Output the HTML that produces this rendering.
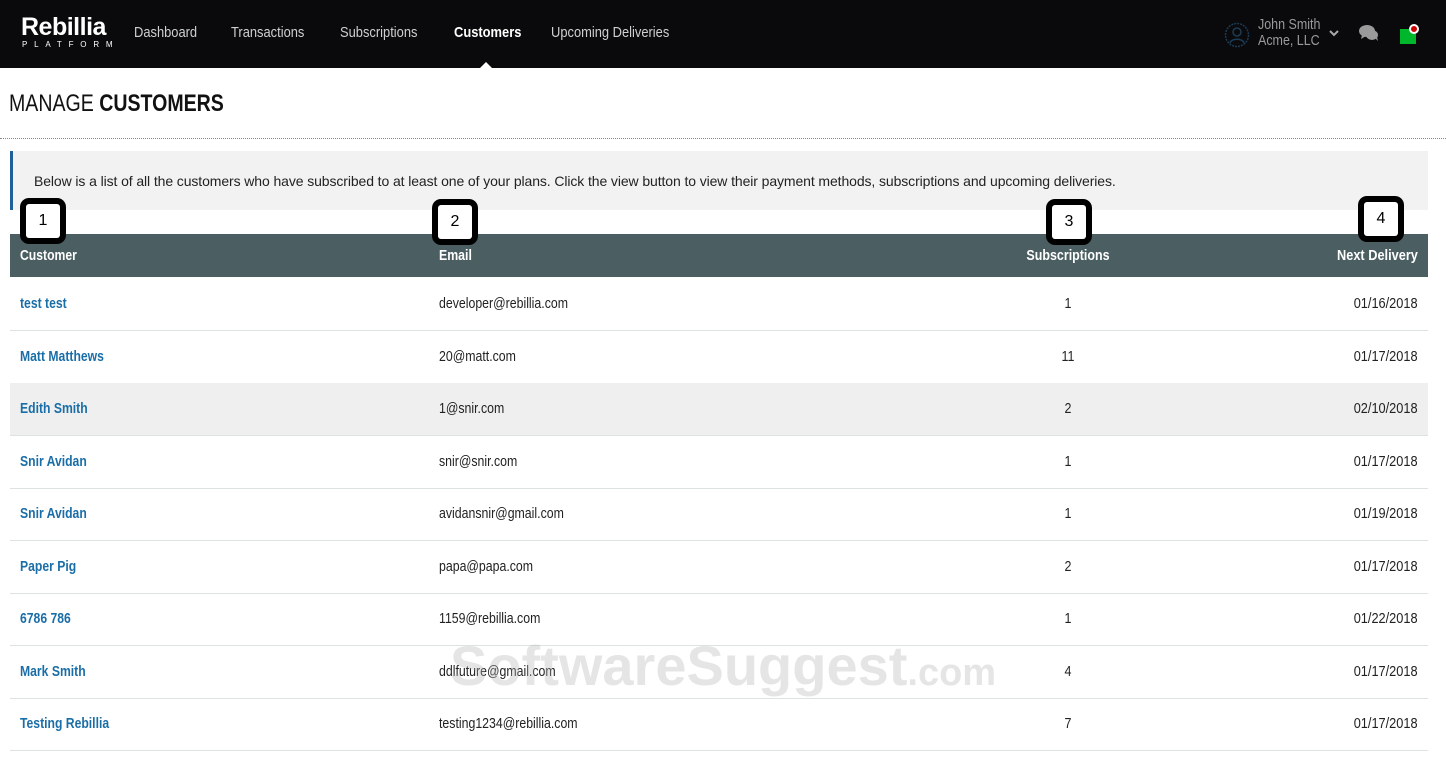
<!DOCTYPE html>
<html><head><meta charset="utf-8"><style>
*{margin:0;padding:0;box-sizing:border-box}
body{width:1446px;height:762px;overflow:hidden;background:#fff;font-family:"Liberation Sans",sans-serif;position:relative;color:#222}
.nav{position:absolute;left:0;top:0;width:1446px;height:68px;background:#0a0a0c}
.nav a{position:absolute;top:24px;color:#cfd0d2;font-size:15px;transform:scaleX(0.86);transform-origin:left center;white-space:nowrap}
.logo{position:absolute;left:21px;top:13px;color:#fff;font-weight:bold;font-size:25px;letter-spacing:-0.5px}
.plat{position:absolute;left:22px;top:40px;color:#fff;font-size:8px;letter-spacing:6.8px}
.caret{position:absolute;left:480px;top:62px;width:0;height:0;border-left:6px solid transparent;border-right:6px solid transparent;border-bottom:6px solid #fff}
h1{position:absolute;left:9px;top:90px;font-size:24px;font-weight:normal;color:#111;transform:scaleX(0.815);transform-origin:left center;white-space:nowrap}
.dot{position:absolute;left:0;top:138px;width:1446px;border-top:1px dotted #888}
.info{position:absolute;left:10px;top:151px;width:1418px;height:59px;background:#f2f2f2;border-left:3px solid #1f5f9a;font-size:14px;padding:22px 0 0 21px;color:#222;letter-spacing:-0.1px;white-space:nowrap}
.hd{position:absolute;left:10px;top:234px;width:1418px;height:43px;background:#4b5f63;color:#fff;font-weight:bold;font-size:14.5px}
.hd span,.r span{position:absolute;top:14px;white-space:nowrap}
.r{position:absolute;left:10px;width:1418px;height:53px;border-bottom:1px solid #dde3e3;font-size:14.5px}
.r span{top:18px}
.c1{left:10px;color:#1a6ea8;font-weight:bold;transform:scaleX(0.84);transform-origin:left center}
.c2{left:429px;transform:scaleX(0.85);transform-origin:left center}
.c3{left:958px;width:200px;text-align:center;transform:scaleX(0.86)}
.c4{right:10px;transform:scaleX(0.88);transform-origin:right center}
.badge{position:absolute;width:46px;height:46px;background:#000;border-radius:9px;padding:6px}
.badge div{background:#fff;width:100%;height:100%;border-radius:3px;text-align:center;font:16px/34px "Liberation Sans",sans-serif;color:#000}
.wm{position:absolute;left:450px;top:633px;font:bold 56px "Liberation Sans",sans-serif;color:rgba(180,180,180,0.35);white-space:nowrap}
</style></head><body>
<div class="nav">
<div class="logo">Rebillia</div><div class="plat">PLATFORM</div>
<a style="left:134px">Dashboard</a><a style="left:231px">Transactions</a><a style="left:340px">Subscriptions</a><a style="left:454px;color:#fff;font-weight:bold">Customers</a><a style="left:551px">Upcoming Deliveries</a>
<div class="caret"></div>
<svg style="position:absolute;left:1224px;top:22px" width="26" height="26"><circle cx="13" cy="13" r="11.5" fill="none" stroke="#1c3b55" stroke-width="1.5" stroke-dasharray="2 1"/><circle cx="13" cy="10" r="4" fill="none" stroke="#1c3b55" stroke-width="1.5"/><path d="M6 21c1-5 13-5 14 0" fill="none" stroke="#1c3b55" stroke-width="1.5"/></svg>
<div style="position:absolute;left:1258px;top:17px;color:#9a9a9a;font-size:14.5px;line-height:16px;transform:scaleX(0.86);transform-origin:left center;white-space:nowrap">John Smith<br>Acme, LLC</div>
<svg style="position:absolute;left:1329px;top:30px" width="10" height="7"><path d="M1 1l4 4 4-4" fill="none" stroke="#aaa" stroke-width="2"/></svg>
<svg style="position:absolute;left:1359px;top:24px" width="20" height="18"><ellipse cx="8" cy="7" rx="8" ry="6" fill="#9a9a9a"/><ellipse cx="13" cy="11" rx="6" ry="5" fill="#9a9a9a"/><path d="M3 11l-1 4 5-3z M16 14l3 3-1-4z" fill="#9a9a9a"/></svg>
<div style="position:absolute;left:1400px;top:29px;width:16px;height:15px;background:#00b62a"></div>
<div style="position:absolute;left:1409px;top:24px;width:10px;height:10px;border-radius:50%;background:#c00;border:2px solid #fff"></div>
</div>
<h1>MANAGE <b>CUSTOMERS</b></h1>
<div class="dot"></div>
<div class="info">Below is a list of all the customers who have subscribed to at least one of your plans. Click the view button to view their payment methods, subscriptions and upcoming deliveries.</div>
<div class="hd"><span class="c1" style="color:#fff">Customer</span><span class="c2">Email</span><span class="c3">Subscriptions</span><span class="c4">Next Delivery</span></div>
<div class="r" style="top:278px"><span class="c1">test test</span><span class="c2">developer@rebillia.com</span><span class="c3">1</span><span class="c4">01/16/2018</span></div>
<div class="r" style="top:330.5px"><span class="c1">Matt Matthews</span><span class="c2">20@matt.com</span><span class="c3">11</span><span class="c4">01/17/2018</span></div>
<div class="r" style="top:383px;background:#efefef"><span class="c1">Edith Smith</span><span class="c2">1@snir.com</span><span class="c3">2</span><span class="c4">02/10/2018</span></div>
<div class="r" style="top:435.5px"><span class="c1">Snir Avidan</span><span class="c2">snir@snir.com</span><span class="c3">1</span><span class="c4">01/17/2018</span></div>
<div class="r" style="top:488px"><span class="c1">Snir Avidan</span><span class="c2">avidansnir@gmail.com</span><span class="c3">1</span><span class="c4">01/19/2018</span></div>
<div class="r" style="top:540.5px"><span class="c1">Paper Pig</span><span class="c2">papa@papa.com</span><span class="c3">2</span><span class="c4">01/17/2018</span></div>
<div class="r" style="top:593px"><span class="c1">6786 786</span><span class="c2">1159@rebillia.com</span><span class="c3">1</span><span class="c4">01/22/2018</span></div>
<div class="r" style="top:645.5px"><span class="c1">Mark Smith</span><span class="c2">ddlfuture@gmail.com</span><span class="c3">4</span><span class="c4">01/17/2018</span></div>
<div class="r" style="top:698px"><span class="c1">Testing Rebillia</span><span class="c2">testing1234@rebillia.com</span><span class="c3">7</span><span class="c4">01/17/2018</span></div>
<div class="wm">SoftwareSuggest<span style="font-size:38px">.com</span></div>
<div class="badge" style="left:20px;top:198px"><div>1</div></div>
<div class="badge" style="left:432px;top:199px"><div>2</div></div>
<div class="badge" style="left:1046px;top:199px"><div>3</div></div>
<div class="badge" style="left:1358px;top:196px"><div>4</div></div>
</body></html>
